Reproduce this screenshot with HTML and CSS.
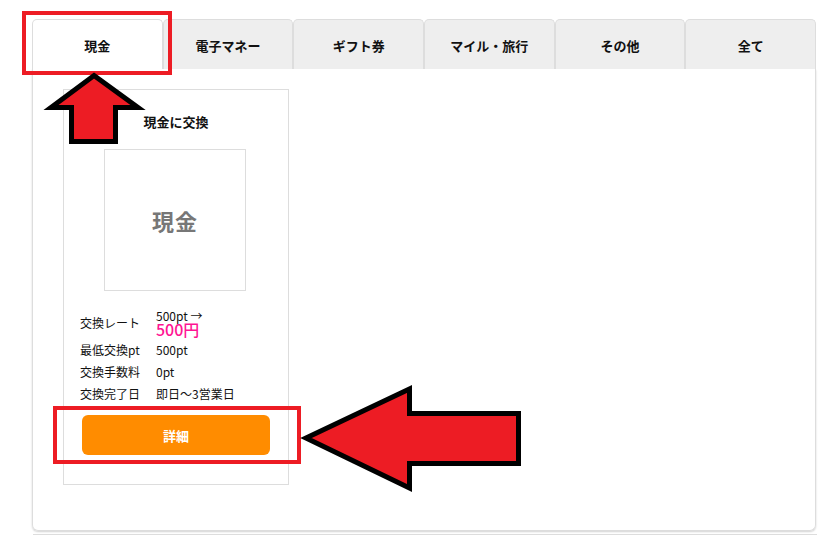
FILE: index.html
```html
<!DOCTYPE html>
<html lang="ja">
<head>
<meta charset="utf-8">
<title>交換</title>
<link rel="stylesheet" href="styles.css">
</head>
<body>
<div class="page">
  <div class="panel">
    <div class="tabs">
      <div class="tab active">現金</div>
      <div class="tab">電子マネー</div>
      <div class="tab">ギフト券</div>
      <div class="tab">マイル・旅行</div>
      <div class="tab">その他</div>
      <div class="tab">全て</div>
    </div>
    <div class="tab-body">
      <div class="card">
        <div class="card-title">現金に交換</div>
        <div class="thumb">現金</div>
        <div class="info">
          <div class="label">交換レート</div>
          <div class="value rate"><span class="rate-from">500pt →</span><span class="rate-to">500円</span></div>
          <div class="label">最低交換pt</div>
          <div class="value">500pt</div>
          <div class="label">交換手数料</div>
          <div class="value">0pt</div>
          <div class="label">交換完了日</div>
          <div class="value">即日～3営業日</div>
        </div>
        <div class="btn">詳細</div>
      </div>
    </div>
  </div>
  <div class="next-panel"></div>
</div>
<svg class="annot" width="826" height="536" viewBox="0 0 826 536">
  <rect x="24" y="13" width="146" height="60" fill="none" stroke="#ed1c24" stroke-width="4"/>
  <rect x="55" y="408" width="244" height="54" fill="none" stroke="#ed1c24" stroke-width="4"/>
  <polygon points="94,75.5 138,107.5 115.5,107.5 115.5,141.5 71.5,141.5 71.5,107.5 51,107.5" fill="#ed1c24" stroke="#000" stroke-width="5" stroke-linejoin="miter"/>
  <polygon points="306,438 409.5,389 409.5,413.5 518.5,413.5 518.5,463.5 409.5,463.5 409.5,488" fill="#ed1c24" stroke="#000" stroke-width="5" stroke-linejoin="miter"/>
</svg>
</body>
</html>
```
FILE: styles.css
```css
html, body {
  margin: 0;
  padding: 0;
  background: #fff;
}
body {
  font-family: "Noto Sans CJK JP", "Noto Sans", sans-serif;
  color: #111;
  position: relative;
  width: 826px;
  height: 536px;
  overflow: hidden;
}
.page {
  padding: 19px 10px 0 32px;
}
.panel {
  width: 784px;
}
.tabs {
  display: flex;
  height: 50px;
}
.tab {
  flex: 1;
  box-sizing: border-box;
  height: 50px;
  background: #eee;
  border: 1px solid #ddd;
  border-bottom: none;
  border-radius: 5px 5px 0 0;
  display: flex;
  align-items: center;
  justify-content: center;
  font-size: 13px;
  font-weight: bold;
  color: #111;
  padding-top: 1px;
}
.tab.active {
  background: #fff;
}
.tab-body {
  box-sizing: border-box;
  height: 462px;
  border: 1px solid #ddd;
  border-top: none;
  border-radius: 0 0 6px 6px;
  box-shadow: 0 1px 2px rgba(0,0,0,0.18);
  padding: 20px 0 0 30px;
}
.card {
  box-sizing: border-box;
  width: 226px;
  height: 396px;
  border: 1px solid #ddd;
  padding: 22px 16px 0 16px;
  display: flex;
  flex-direction: column;
}
.card-title {
  text-align: center;
  font-size: 13px;
  font-weight: bold;
  line-height: 20px;
}
.thumb {
  box-sizing: border-box;
  width: 142px;
  height: 142px;
  margin: 17px auto 0 24px;
  border: 1px solid #ddd;
  display: flex;
  align-items: center;
  justify-content: center;
  font-size: 22px;
  font-weight: bold;
  color: #777;
  letter-spacing: 1px;
}
.info {
  display: grid;
  grid-template-columns: 76px 1fr;
  align-items: center;
  margin-top: 18px;
  font-size: 12px;
  line-height: 22px;
}
.rate {
  display: flex;
  flex-direction: column;
  margin-bottom: 2px;
}
.rate-from {
  line-height: 13px;
}
.rate-to {
  color: #ff1493;
  font-size: 16px;
  font-weight: 500;
  line-height: 15px;
}
.label {
  white-space: nowrap;
}
.info .label:first-child {
  margin-bottom: 2px;
}
.btn {
  width: 188px;
  height: 40px;
  margin: 10px auto 0;
  background: #ff8c00;
  border-radius: 6px;
  color: #fff;
  font-size: 13px;
  font-weight: bold;
  display: flex;
  align-items: center;
  justify-content: center;
}
.next-panel {
  margin-top: 3px;
  margin-left: 1px;
  width: 784px;
  border-top: 1px solid #ddd;
  height: 10px;
}
.annot {
  position: absolute;
  left: 0;
  top: 0;
  pointer-events: none;
}
```
